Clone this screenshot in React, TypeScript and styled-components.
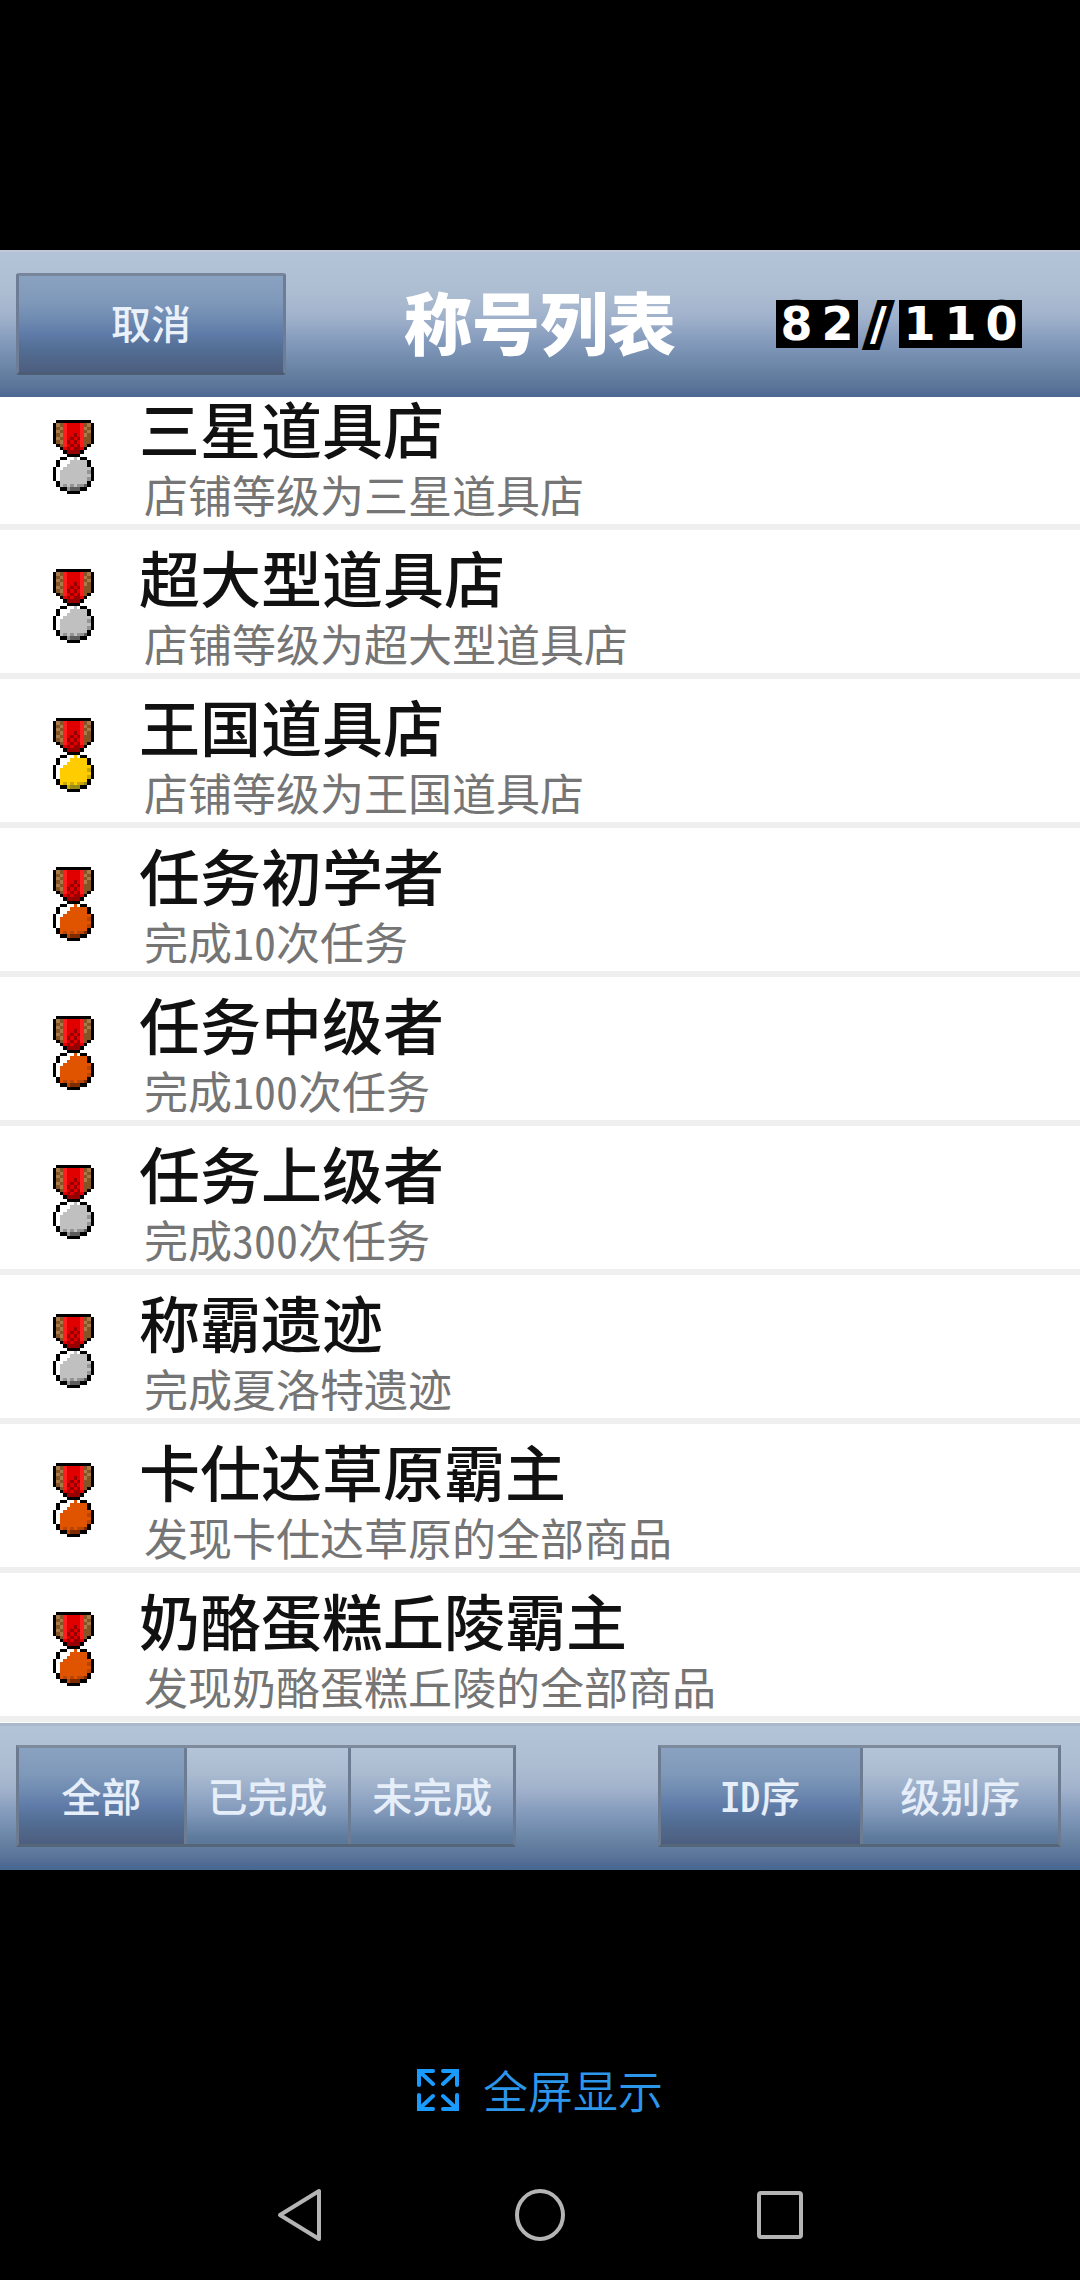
import React, { useState } from "react";
import styled, { createGlobalStyle } from "styled-components";

const GlobalStyle = createGlobalStyle`
  *, *::before, *::after { box-sizing: border-box; }
  body {
    margin: 0;
    background: #000;
    font-family: "Noto Sans CJK SC", "Liberation Sans", sans-serif;
    font-feature-settings: "hwid";
  }
  button { font: inherit; font-feature-settings: inherit; cursor: pointer; }
`;

const barGradient =
  "linear-gradient(#b4c4d8 0%, #aebed2 27%, #a1b2cc 45%, #8198ba 64%, #6783a3 82%, #5b7499 93%, #4c6791 100%)";
const pressedGradient =
  "linear-gradient(#8aa2c1 0%, #7f99ba 27%, #6c88af 48%, #5f7ba8 60%, #526d92 78%, #4d5e7f 100%)";
const raisedGradient =
  "linear-gradient(#b4c4d8 0%, #aabbd0 27%, #94a8c6 50%, #7d95b7 70%, #5f7c9f 92%, #5b7899 100%)";

const Page = styled.div`
  min-height: 100vh;
  padding-top: 250px;
  display: flex;
  flex-direction: column;
  background: #000;
`;

const Panel = styled.main`
  background: #fff;
`;

const Header = styled.header`
  min-height: 147px;
  display: grid;
  grid-template-columns: 1fr auto 1fr;
  align-items: center;
  padding-left: 16px;
  padding-right: 16px;
  background: ${barGradient};
  box-shadow: inset 0 2px #c1c8d8;
`;

const CancelButton = styled.button`
  justify-self: start;
  width: 270px;
  height: 102px;
  padding: 0 0 4px;
  border: 3px solid;
  border-color: #78869b #6d7d95 #4b5c74 #6d7d95;
  border-radius: 3px;
  background: ${pressedGradient};
  color: #eaf1fb;
  font-size: 40px;
  line-height: 60px;
  font-weight: 500;
`;

const Title = styled.h1`
  margin: 0;
  padding-bottom: 6px;
  color: #fff;
  font-size: 68px;
  line-height: 92px;
  font-weight: 900;
`;

const Counter = styled.output`
  justify-self: end;
  display: grid;
  grid-auto-flow: column;
  grid-auto-columns: 41px;
  margin-right: 42px;
  color: #fff;
  font-family: "DejaVu Sans", sans-serif;
  font-size: 46px;
  line-height: 48px;
  font-weight: 700;
  text-align: center;
  -webkit-text-stroke: 12px #000;
  paint-order: stroke fill;
`;

const CounterCell = styled.span<{ $solid: boolean }>`
  background: ${(p) => (p.$solid ? "#000" : "transparent")};
`;

const ListView = styled.div`
  overflow: hidden;
  padding-bottom: 1px;
`;

/* The list rests slightly scrolled under the header. */
const TitleList = styled.ol`
  list-style: none;
  margin: -16px 0 0;
  padding: 0;
`;

const Row = styled.li`
  display: flex;
  gap: 45px;
  padding: 19px 16px 2px 53px;
  border-bottom: 6px solid #efefef;
`;

const MedalArt = styled.svg`
  flex: none;
  width: 41px;
  height: 74px;
  margin-top: 20px;
`;

const RowText = styled.div`
  min-width: 0;
  white-space: nowrap;
`;

const Name = styled.h2`
  margin: 0;
  color: #111;
  font-family: "Liberation Sans", "Noto Sans CJK SC", sans-serif;
  font-size: 61px;
  line-height: 66px;
  font-weight: 500;
`;

const Detail = styled.p`
  margin: 0;
  padding-left: 5px;
  color: #757575;
  font-size: 44px;
  line-height: 56px;
`;

const Toolbar = styled.footer`
  min-height: 147px;
  display: flex;
  align-items: center;
  justify-content: space-between;
  padding: 0 19px 0 16px;
  border-bottom: 4px solid #486991;
  border-top: 3px solid #a9b9cb;
  background: ${barGradient};
`;

const Segments = styled.div<{ $width: number }>`
  display: grid;
  grid-auto-flow: column;
  grid-auto-columns: 1fr;
  width: ${(p) => p.$width}px;
  height: 102px;
  border: 3px solid;
  border-color: #7d8a9b #6c7b8f #566679 #6c7b8f;
`;

const Segment = styled.button<{ $active: boolean }>`
  padding: 0 0 2px;
  border: 0;
  background: ${(p) => (p.$active ? pressedGradient : raisedGradient)};
  color: #e6eef9;
  font-size: 40px;
  line-height: 60px;
  font-weight: 500;
  white-space: nowrap;

  & + & { border-left: 3px solid #6c7c92; }
`;

const FullscreenButton = styled.button`
  align-self: center;
  display: flex;
  align-items: center;
  gap: 24px;
  margin-top: 176px;
  height: 88px;
  padding: 0;
  border: 0;
  background: none;
  color: #2c96ea;
  font-size: 45px;
  line-height: 66px;
  font-weight: 350;
`;

const ExpandArt = styled.svg`
  width: 42px;
  height: 42px;
`;

const NavBar = styled.nav`
  display: flex;
  justify-content: center;
  gap: 184px;
  margin-top: auto;
  height: 128px;
`;

const NavButton = styled.button`
  display: flex;
  align-items: center;
  width: 56px;
  padding: 0;
  border: 0;
  background: none;
  color: #b4b4b4;
`;

const NavArt = styled.svg`
  width: 56px;
  height: 60px;
`;

type Tier = "silver" | "gold" | "bronze";

const tiers: Record<Tier, { face: string; edge: string; rim: string }> = {
  silver: { face: "#c0c0c0", edge: "#949494", rim: "#5c5c5c" },
  gold: { face: "#ffcc00", edge: "#c8a808", rim: "#948c14" },
  bronze: { face: "#e05400", edge: "#b84608", rim: "#7c2c00" },
};

const medalPixels = [
  ".kkkkkkkkkk.",
  "ktbRrrrrRbtk",
  "kbtRrrrrRtbk",
  "ktbRrrrrRbtk",
  "kbtRrrdrRtbk",
  "ktbRrdrdRbbk",
  "kbtRdrdrRbbk",
  ".kbRrdrdRbk.",
  "..krdrddrk..",
  "...kddddk...",
  "....kkkk....",
  "..kkwwfwkk..",
  ".kwwwfffffk.",
  ".kwwffffffk.",
  "kwwffffffffk",
  "kwffffffffek",
  "kwfffffffffk",
  "kwffffffffek",
  ".kffffffffk.",
  ".kfefefeemk.",
  "..kkemmmkk..",
  "....kkkk....",
];

function Medal({ tier }: { tier: Tier }) {
  const t = tiers[tier];
  const ink: Record<string, string> = {
    k: "#000", t: "#a87c4a", b: "#845426", R: "#ff1c1c", r: "#e00000",
    d: "#960000", w: "#fff", f: t.face, e: t.edge, m: t.rim,
  };
  return (
    <MedalArt viewBox="0 0 12 22" preserveAspectRatio="none" shapeRendering="crispEdges" aria-hidden="true">
      {medalPixels.flatMap((line, y) =>
        [...line].map((c, x) =>
          c === "." ? null : <rect key={`${x}-${y}`} x={x} y={y} width="1" height="1" fill={ink[c]} />
        )
      )}
    </MedalArt>
  );
}

const titles: { name: string; detail: string; tier: Tier }[] = [
  { name: "三星道具店", detail: "店铺等级为三星道具店", tier: "silver" },
  { name: "超大型道具店", detail: "店铺等级为超大型道具店", tier: "silver" },
  { name: "王国道具店", detail: "店铺等级为王国道具店", tier: "gold" },
  { name: "任务初学者", detail: "完成10次任务", tier: "bronze" },
  { name: "任务中级者", detail: "完成100次任务", tier: "bronze" },
  { name: "任务上级者", detail: "完成300次任务", tier: "silver" },
  { name: "称霸遗迹", detail: "完成夏洛特遗迹", tier: "silver" },
  { name: "卡仕达草原霸主", detail: "发现卡仕达草原的全部商品", tier: "bronze" },
  { name: "奶酪蛋糕丘陵霸主", detail: "发现奶酪蛋糕丘陵的全部商品", tier: "bronze" },
];

function SegmentedControl({ label, options, width }: { label: string; options: string[]; width: number }) {
  const [active, setActive] = useState(options[0]);
  return (
    <Segments role="group" aria-label={label} $width={width}>
      {options.map((o) => (
        <Segment key={o} type="button" $active={o === active} aria-pressed={o === active} onClick={() => setActive(o)}>
          {o}
        </Segment>
      ))}
    </Segments>
  );
}

export default function App() {
  return (
    <Page>
      <GlobalStyle />
      <Panel>
        <Header>
          <CancelButton type="button">取消</CancelButton>
          <Title>称号列表</Title>
          <Counter>
            {[..."82/110"].map((c, i) => (
              <CounterCell key={i} $solid={c !== "/"}>{c}</CounterCell>
            ))}
          </Counter>
        </Header>
        <ListView>
          <TitleList>
            {titles.map((t) => (
              <Row key={t.name}>
                <Medal tier={t.tier} />
                <RowText>
                  <Name>{t.name}</Name>
                  <Detail>{t.detail}</Detail>
                </RowText>
              </Row>
            ))}
          </TitleList>
        </ListView>
        <Toolbar>
          <SegmentedControl label="筛选" options={["全部", "已完成", "未完成"]} width={500} />
          <SegmentedControl label="排序" options={["ID序", "级别序"]} width={403} />
        </Toolbar>
      </Panel>
      <FullscreenButton type="button">
        <ExpandArt viewBox="0 0 42 42" fill="none" stroke="#1a9bff" strokeWidth="4" strokeLinecap="round" aria-hidden="true">
          <path d="M16 2H2V16M2 2L16 15M26 2H40V16M40 2L26 15M2 26V40H16M2 40L16 27M40 26V40H26M40 40L26 27" />
        </ExpandArt>
        全屏显示
      </FullscreenButton>
      <NavBar aria-label="系统导航">
        <NavButton type="button" aria-label="返回">
          <NavArt viewBox="0 0 56 60" fill="none" stroke="currentColor" strokeWidth="4" strokeLinejoin="round" aria-hidden="true">
            <path d="M47 5V53L8 29Z" />
          </NavArt>
        </NavButton>
        <NavButton type="button" aria-label="主页">
          <NavArt viewBox="0 0 56 60" fill="none" stroke="currentColor" strokeWidth="4" aria-hidden="true">
            <ellipse cx="28" cy="29" rx="23" ry="24" />
          </NavArt>
        </NavButton>
        <NavButton type="button" aria-label="最近任务">
          <NavArt viewBox="0 0 56 60" fill="none" stroke="currentColor" strokeWidth="4" aria-hidden="true">
            <rect x="7" y="7" width="42" height="44" rx="2" />
          </NavArt>
        </NavButton>
      </NavBar>
    </Page>
  );
}
